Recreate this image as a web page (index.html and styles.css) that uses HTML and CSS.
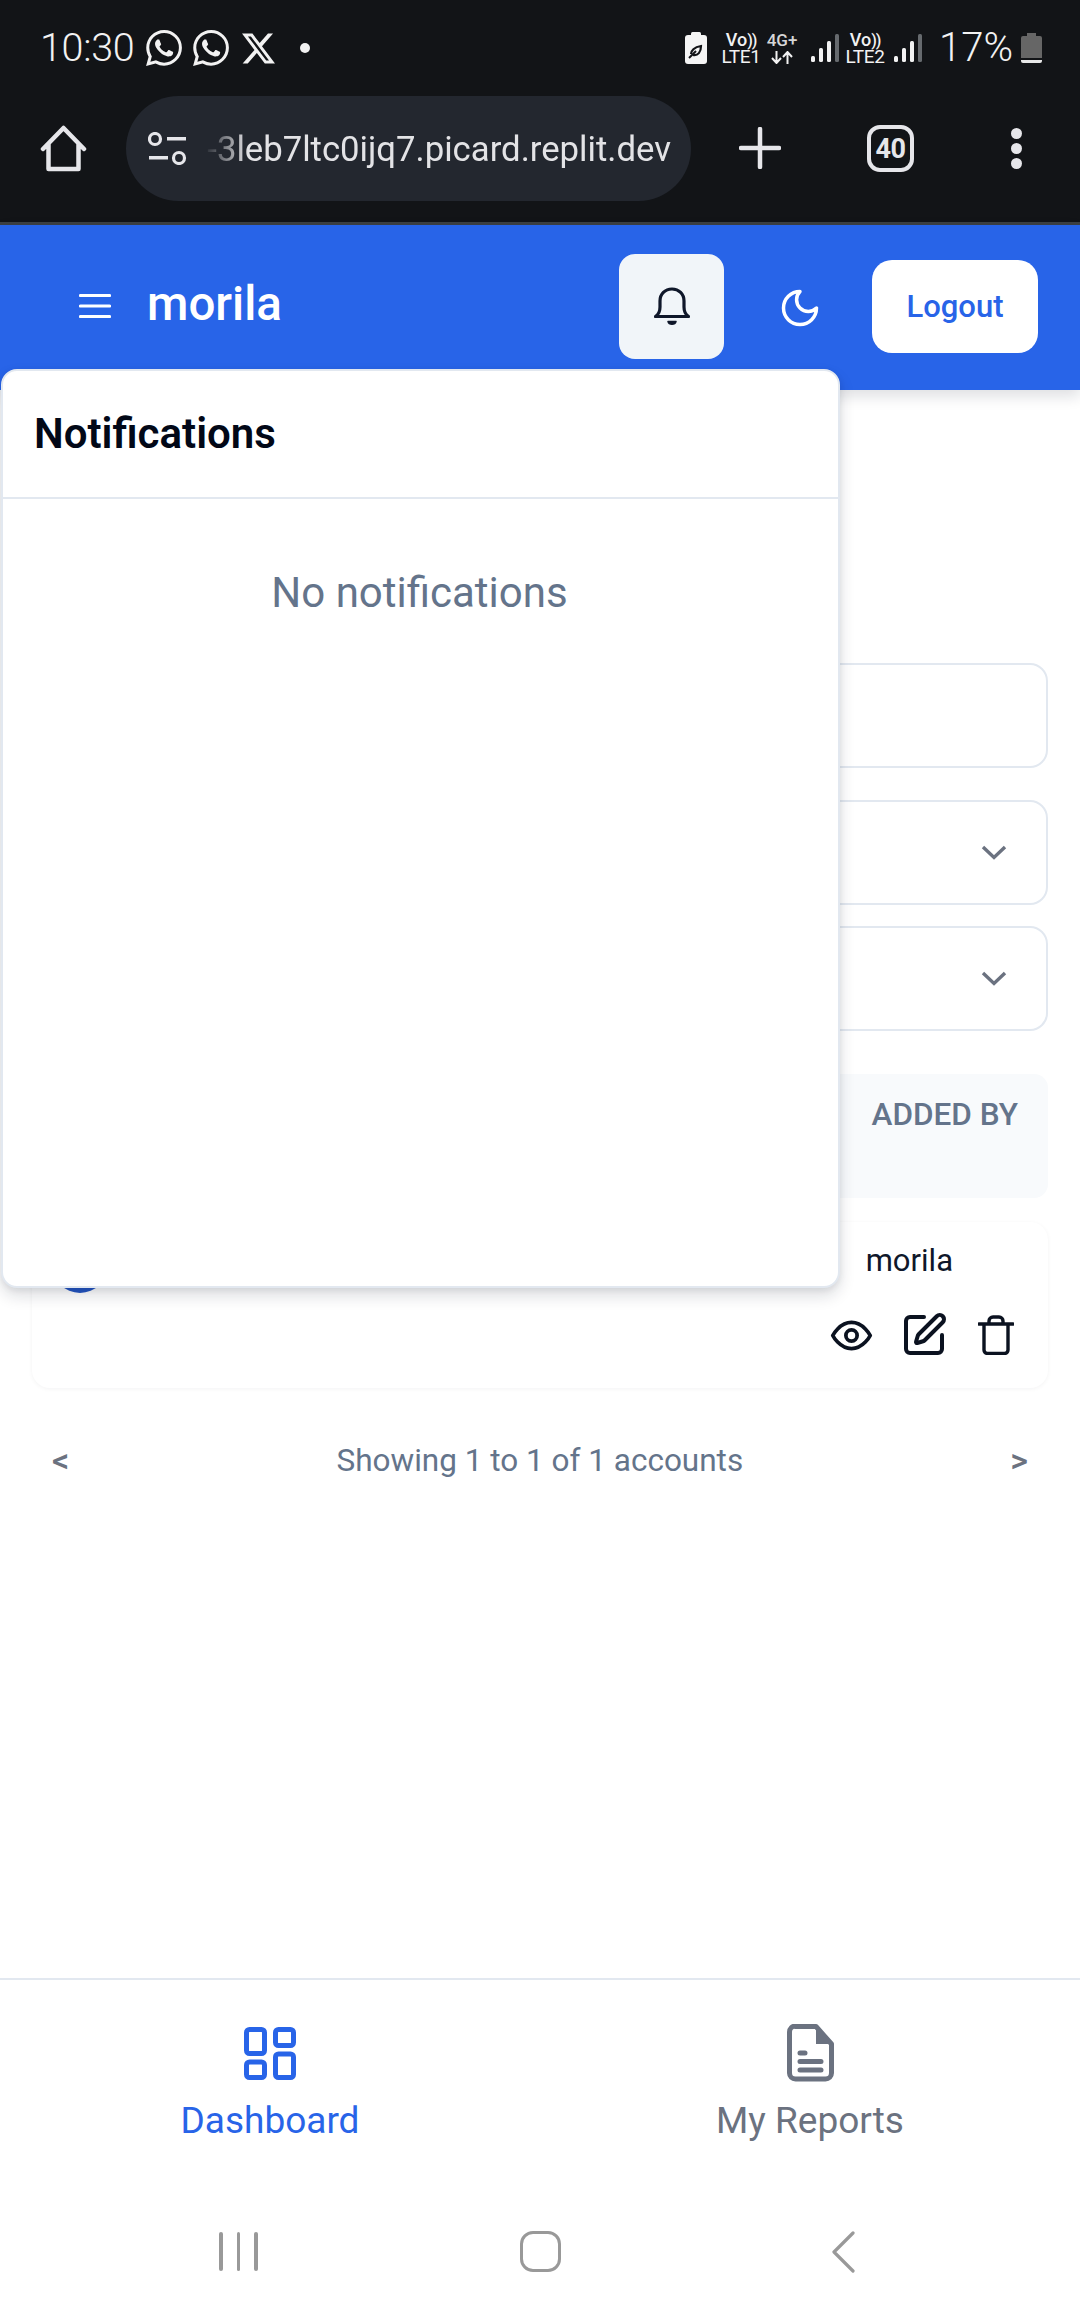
FILE: index.html
```html
<!DOCTYPE html>
<html lang="en">
<head>
<meta charset="utf-8">
<title>morila</title>
<link rel="stylesheet" href="styles.css">
</head>
<body>
<svg class="defs" width="0" height="0" aria-hidden="true">
  <symbol id="wa" viewBox="0 0 24 24"><path fill="currentColor" d="M17.472 14.382c-.297-.149-1.758-.867-2.03-.967-.273-.099-.471-.148-.67.15-.197.297-.767.966-.94 1.164-.173.199-.347.223-.644.075-.297-.15-1.255-.463-2.39-1.475-.883-.788-1.48-1.761-1.653-2.059-.173-.297-.018-.458.13-.606.134-.133.298-.347.446-.52.149-.174.198-.298.298-.497.099-.198.05-.371-.025-.52-.075-.149-.669-1.612-.916-2.207-.242-.579-.487-.5-.669-.51-.173-.008-.371-.01-.57-.01-.198 0-.52.074-.792.372-.272.297-1.04 1.016-1.04 2.479 0 1.462 1.065 2.875 1.213 3.074.149.198 2.096 3.2 5.077 4.487.709.306 1.262.489 1.694.625.712.227 1.36.195 1.871.118.571-.085 1.758-.719 2.006-1.413.248-.694.248-1.289.173-1.413-.074-.124-.272-.198-.57-.347m-5.421 7.403h-.004a9.87 9.87 0 01-5.031-1.378l-.361-.214-3.741.982.998-3.648-.235-.374a9.86 9.86 0 01-1.51-5.26c.001-5.45 4.436-9.884 9.888-9.884 2.64 0 5.122 1.03 6.988 2.898a9.825 9.825 0 012.893 6.994c-.003 5.45-4.437 9.884-9.885 9.884m8.413-18.297A11.815 11.815 0 0012.05 0C5.495 0 .16 5.335.157 11.892c0 2.096.547 4.142 1.588 5.945L.057 24l6.305-1.654a11.882 11.882 0 005.683 1.448h.005c6.554 0 11.89-5.335 11.893-11.893a11.821 11.821 0 00-3.48-8.413z"/></symbol>
  <symbol id="bars" viewBox="0 0 30 28">
    <rect x="0" y="22" width="4" height="6" rx="1.5" fill="#f2f2f2"/>
    <rect x="8" y="14" width="4" height="14" rx="1.5" fill="#f2f2f2"/>
    <rect x="16" y="7" width="4" height="21" rx="1.5" fill="#f2f2f2"/>
    <rect x="24" y="0" width="4" height="28" rx="1.5" fill="#666a6e"/>
  </symbol>
  <symbol id="chev" viewBox="0 0 26 15"><path d="M2 2l11 10.500L24 2" fill="none" stroke="#6b7280" stroke-width="3.400"/></symbol>
</svg>

<div class="app">
  <div class="chrome">
    <div class="status">
      <span class="time">10:30</span>
      <svg class="ic-wa"><use href="#wa"/></svg>
      <svg class="ic-wa ic-wa2"><use href="#wa"/></svg>
      <svg class="ic-x" viewBox="0 0 24 24"><path fill="#f2f2f2" d="M18.901 1.153h3.68l-8.04 9.19L24 22.846h-7.406l-5.8-7.584-6.638 7.584H.474l8.6-9.83L0 1.154h7.594l5.243 6.932ZM17.61 20.644h2.039L6.486 3.24H4.298Z"/></svg>
      <span class="dot"></span>
      <span class="grow"></span>
      <svg class="ic-eco" viewBox="0 0 22 32"><rect x="0" y="3" width="22" height="29" rx="3" fill="#f5f5f5"/><rect x="6" y="0" width="10" height="5" rx="1.5" fill="#f5f5f5"/><path d="M6 22c0-3 3-7 10-8 0 6-3 10-8 9" fill="none" stroke="#121417" stroke-width="2.200"/><path d="M4 26l7-7" stroke="#121417" stroke-width="2"/></svg>
      <span class="net net1"><b>Vo<i>))</i></b><em>LTE1</em></span>
      <span class="net4g"><b>4G+</b>
        <svg class="ic-arrows" viewBox="0 0 22 13"><path d="M5.500 0v11M1 7l4.500 5L10 7M16.500 13V2M12 6l4.500-5L21 6" fill="none" stroke="#f2f2f2" stroke-width="2"/></svg>
      </span>
      <svg class="ic-bars ic-bars1"><use href="#bars"/></svg>
      <span class="net net2"><b>Vo<i>))</i></b><em>LTE2</em></span>
      <svg class="ic-bars ic-bars2"><use href="#bars"/></svg>
      <span class="pct">17%</span>
      <svg class="ic-batt" viewBox="0 0 21 30"><path d="M6 0h9v3h4a2 2 0 0 1 2 2v20H0V5a2 2 0 0 1 2-2h4z" fill="#666"/><path d="M0 27h21v1a2 2 0 0 1-2 2H2a2 2 0 0 1-2-2z" fill="#e8e8e8"/></svg>
    </div>
    <div class="toolbar">
      <svg class="ic-home" viewBox="0 0 47 47"><path d="M3 24L23.500 3 44 24M8.500 19v25h30V19" fill="none" stroke="#e6e6ea" stroke-width="4.500" stroke-linejoin="round" stroke-linecap="round"/></svg>
      <div class="pill">
        <svg class="ic-tune" viewBox="0 0 39 33"><circle cx="7" cy="7" r="5.500" fill="none" stroke="#e6e6ea" stroke-width="3.200"/><rect x="19" y="5" width="19" height="3.500" fill="#e6e6ea"/><rect x="1" y="24" width="19" height="3.500" fill="#e6e6ea"/><circle cx="31" cy="26" r="5.500" fill="none" stroke="#e6e6ea" stroke-width="3.200"/></svg>
        <div class="url"><span>-3leb7ltc0ijq7.picard.replit.dev</span></div>
      </div>
      <svg class="ic-plus" viewBox="0 0 42 42"><path d="M21 2v38M2 21h38" stroke="#e6e6ea" stroke-width="4.500" stroke-linecap="round"/></svg>
      <span class="tabs">40</span>
      <span class="more"><i></i><i></i><i></i></span>
    </div>
  </div>

  <header class="appbar">
    <svg class="ic-menu" viewBox="0 0 32 26"><path d="M1.500 2.500h29M1.500 13h29M1.500 23.500h29" stroke="#fff" stroke-width="3.200" stroke-linecap="round"/></svg>
    <span class="brand">morila</span>
    <span class="grow"></span>
    <button class="bell-btn">
      <svg class="ic-bell" viewBox="0 0 36 40"><path d="M1.500 29.500c3-2 4.500-5 4.500-9.500v-6C6 7 11 2 18 2s12 5 12 12v6c0 4.500 1.500 7.500 4.500 9.500z" fill="none" stroke="#0f172a" stroke-width="3.200" stroke-linejoin="round"/><path d="M14 34.500c1 3.500 7 3.500 8 0z" fill="#0f172a" stroke="#0f172a" stroke-width="1.500" stroke-linejoin="round"/></svg>
    </button>
    <svg class="ic-moon" viewBox="0 0 24 24"><path d="M12 3a6 6 0 0 0 9 9 9 9 0 1 1-9-9Z" fill="none" stroke="#fff" stroke-width="1.900" stroke-linecap="round" stroke-linejoin="round"/></svg>
    <button class="logout">Logout</button>
  </header>

  <main class="content">
    <div class="field"></div>
    <div class="field field-select"><svg class="chev"><use href="#chev"/></svg></div>
    <div class="field field-select field-last"><svg class="chev"><use href="#chev"/></svg></div>
    <div class="thead"><span>ADDED BY</span></div>
    <div class="row">
      <span class="avatar"></span>
      <div class="row-right">
        <span class="owner">morila</span>
        <div class="actions">
          <svg class="ic-eye" viewBox="0 0 24 24"><path d="M2 12s3.600-7 10-7 10 7 10 7-3.600 7-10 7-10-7-10-7Z" fill="none" stroke="#0b1220" stroke-width="2" stroke-linejoin="round"/><circle cx="12" cy="12" r="3" fill="none" stroke="#0b1220" stroke-width="2"/></svg>
          <svg class="ic-edit" viewBox="0 0 24 24"><path d="M12 3H5a2 2 0 0 0-2 2v14a2 2 0 0 0 2 2h14a2 2 0 0 0 2-2v-7" fill="none" stroke="#0b1220" stroke-width="2" stroke-linecap="round"/><path d="M18.375 2.625a1 1 0 0 1 3 3l-9.013 9.014a2 2 0 0 1-.853.505l-2.873.84a.5.5 0 0 1-.62-.62l.84-2.873a2 2 0 0 1 .506-.852z" fill="none" stroke="#0b1220" stroke-width="2" stroke-linejoin="round"/></svg>
          <svg class="ic-trash" viewBox="0 0 36 40"><path d="M1 9h34M6 9v26a3.500 3.500 0 0 0 3.500 3.500h17A3.500 3.500 0 0 0 30 35V9M11 9V6a4 4 0 0 1 4-4h6a4 4 0 0 1 4 4v3" fill="none" stroke="#0b1220" stroke-width="3.400" stroke-linecap="round" stroke-linejoin="round"/></svg>
        </div>
      </div>
    </div>
    <div class="pager">
      <span class="pg">&lt;</span>
      <span class="pg-text">Showing 1 to 1 of 1 accounts</span>
      <span class="pg">&gt;</span>
    </div>
  </main>

  <nav class="tabbar">
    <div class="tab tab-active">
      <svg class="ic-dash" viewBox="0 0 52 53"><g fill="none" stroke="#2864e8" stroke-width="5"><rect x="2.500" y="2.500" width="18" height="24" rx="3"/><rect x="31.500" y="2.500" width="18" height="16" rx="3"/><rect x="31.500" y="27" width="18" height="23.500" rx="3"/><rect x="2.500" y="35" width="18" height="15.500" rx="3"/></g></svg>
      <span>Dashboard</span>
    </div>
    <div class="tab">
      <svg class="ic-doc" viewBox="0 0 47 58"><path d="M8 2.500h21L44.500 20v29a6 6 0 0 1-6 6h-30a6 6 0 0 1-6-6V8a6 6 0 0 1 6-6z" fill="none" stroke="#6b7280" stroke-width="5" stroke-linejoin="round"/><path d="M29 2.500V20h15.500z" fill="#6b7280"/><path d="M13 29h5M13 37.500h21M13 46h21" stroke="#6b7280" stroke-width="5" stroke-linecap="round"/></svg>
      <span>My Reports</span>
    </div>
  </nav>

  <div class="sysnav">
    <span class="recents"><i></i><i></i><i></i></span>
    <span class="homebtn"></span>
    <svg class="backbtn" viewBox="0 0 24 42"><path d="M22 2L3 21l19 19" fill="none" stroke="#999" stroke-width="3.200" stroke-linecap="round" stroke-linejoin="round"/></svg>
  </div>

  <section class="panel">
    <h2 class="panel-title">Notifications</h2>
    <p class="panel-empty">No notifications</p>
  </section>
</div>
</body>
</html>
```
FILE: styles.css
```css
* { box-sizing: border-box; }
html, body { margin: 0; padding: 0; background: #fff; }
body { font-family: Roboto, "Liberation Sans", sans-serif; overflow: hidden; }
.defs { position: absolute; }
svg { display: block; flex: none; }
button { font-family: inherit; border: 0; padding: 0; }
.grow { flex: 1; }

.app { position: relative; width: 1080px; height: 2316px; display: flex; flex-direction: column; overflow: hidden; }

/* browser chrome */
.chrome { height: 225px; flex: none; background: #121417; border-bottom: 3px solid #3c4043; color: #f2f2f2; }
.status { height: 96px; display: flex; align-items: center; padding: 0 38px 0 40px; }
.time { font-size: 39.500px; font-weight: 300; line-height: 1; letter-spacing: -.3px; width: 106px; }
.ic-wa { width: 36px; height: 36px; color: #f2f2f2; }
.ic-wa2 { margin-left: 11px; }
.ic-x { width: 33px; height: 33px; margin-left: 13px; }
.dot { width: 10px; height: 10px; border-radius: 50%; background: #f2f2f2; margin-left: 25px; }
.ic-eco { width: 22px; height: 32px; }
.net, .net4g { display: flex; flex-direction: column; align-items: center; line-height: 17px; }
.net b, .net4g b { font-weight: 500; font-size: 18px; height: 17px; }
.net b i { font-style: normal; font-size: 16px; letter-spacing: -1px; }
.net em { font-style: normal; font-size: 19px; font-weight: 400; height: 17px; letter-spacing: -.4px; }
.net1 { margin-left: 14px; width: 40px; }
.net4g { margin-left: 5px; width: 32px; color: #d6d6d6; }
.net4g b { font-size: 17px; }
.ic-arrows { width: 22px; height: 13px; margin-top: 2px; }
.ic-bars { width: 30px; height: 28px; }
.ic-bars1 { margin-left: 13px; }
.net2 { margin-left: 3px; width: 42px; }
.ic-bars2 { margin-left: 8px; }
.pct { font-size: 40px; font-weight: 300; line-height: 1; margin-left: 15px; width: 77px; white-space: nowrap; }
.ic-batt { width: 21px; height: 30px; margin-left: 5px; }

.toolbar { height: 126px; display: flex; align-items: flex-start; padding-left: 40px; }
.ic-home { width: 47px; height: 47px; margin-top: 29px; }
.pill { width: 565px; height: 105px; margin-left: 39px; border-radius: 53px; background: #23272f; display: flex; align-items: center; padding-left: 22px; }
.ic-tune { width: 39px; height: 33px; }
.url { width: 467px; margin-left: 17px; overflow: hidden; display: flex; justify-content: flex-end; font-size: 34.700px; line-height: 50px; color: #e3e3e6; white-space: nowrap; -webkit-mask-image: linear-gradient(to right, transparent 0, #000 44px); mask-image: linear-gradient(to right, transparent 0, #000 44px); }
.ic-plus { width: 42px; height: 42px; margin: 31px 0 0 48px; }
.tabs { width: 47px; height: 47px; margin: 29px 0 0 86px; border: 4.500px solid #e6e6ea; border-radius: 13px; display: flex; align-items: center; justify-content: center; font-size: 27px; font-weight: 700; letter-spacing: -.5px; color: #e6e6ea; }
.more { display: flex; flex-direction: column; gap: 4px; margin: 32px 0 0 97px; }
.more i { width: 11px; height: 11px; border-radius: 50%; background: #e6e6ea; }

/* app header */
.appbar { position: relative; z-index: 1; height: 165px; flex: none; background: #2864e8; box-shadow: 0 6px 14px rgba(15, 23, 42, .14); display: flex; align-items: center; padding: 0 42px 0 79px; }
.ic-menu { width: 32px; height: 26px; margin-top: -3px; }
.brand { font-size: 47.500px; font-weight: 500; color: #fff; margin-left: 36px; margin-top: -5px; line-height: 1; }
.bell-btn { width: 105px; height: 105px; border-radius: 16px; background: #f1f5f9; display: flex; align-items: center; justify-content: center; margin-top: -2px; }
.ic-bell { width: 36px; height: 40px; }
.ic-moon { width: 44px; height: 44px; margin-left: 53.500px; }
.logout { width: 166px; height: 93px; margin-left: 50.500px; border-radius: 20px; background: #fff; color: #2864e8; font-size: 31px; font-weight: 500; margin-top: -3px; }

/* page */
.content { flex: 1; padding: 273px 32px 0; }
.field { height: 105px; border: 2px solid #e2e8f0; border-radius: 18px; margin-bottom: 32px; display: flex; align-items: center; justify-content: flex-end; padding-right: 39px; }
.field-select { margin-bottom: 21px; }
.field-last { margin-bottom: 43px; }
.chev { width: 26px; height: 15px; }
.thead { height: 124px; background: #f8fafc; border-radius: 14px; display: flex; justify-content: flex-end; padding: 24px 30px 0 0; margin-bottom: 24px; }
.thead span { font-size: 31.500px; font-weight: 500; color: #64748b; line-height: 34px; }
.row { height: 166px; border-radius: 18px; box-shadow: 0 1px 4px rgba(15, 23, 42, .05); display: flex; justify-content: space-between; padding: 0 34px 0 20px; }
.avatar { width: 56px; height: 56px; margin-top: 15px; border-radius: 50%; background: #2456c4; }
.row-right { display: flex; flex-direction: column; align-items: flex-end; padding-top: 21px; }
.owner { font-size: 31px; line-height: 36px; color: #0f172a; padding-right: 61px; }
.actions { display: flex; align-items: center; gap: 25px; margin-top: 32px; }
.ic-eye { width: 45px; height: 45px; }
.ic-edit { width: 48px; height: 48px; margin-left: 1px; }
.ic-trash { width: 36px; height: 40px; margin-left: 5px; }
.pager { display: flex; align-items: center; justify-content: space-between; padding: 0 20px 0 20px; margin-top: 54px; height: 36px; }
.pg { font-size: 34px; font-weight: 500; color: #6b7280; }
.pg-text { font-size: 31.500px; color: #64748b; }

/* tab bar */
.tabbar { flex: none; height: 212px; border-top: 2px solid #e2e8f0; display: grid; grid-template-columns: 1fr 1fr; background: #fff; }
.tab { display: flex; flex-direction: column; align-items: center; padding-top: 47px; color: #6b7280; font-size: 37px; line-height: 42px; }
.tab-active { color: #2864e8; }
.ic-dash { width: 52px; height: 53px; margin-bottom: 20px; }
.ic-doc { width: 47px; height: 58px; margin-top: -3px; margin-bottom: 18px; }

/* system nav */
.sysnav { flex: none; height: 126px; display: flex; align-items: flex-start; padding: 41px 0 0 219px; }
.recents { display: flex; gap: 14px; margin-top: 1px; }
.recents i { width: 3.500px; height: 39px; background: #999; border-radius: 2px; }
.homebtn { width: 41px; height: 41px; border: 3.500px solid #999; border-radius: 13px; margin-left: 262px; }
.backbtn { width: 24px; height: 42px; margin-left: 270px; }

/* notification dropdown */
.panel { position: absolute; z-index: 5; left: 1px; top: 369px; width: 839px; height: 919px; margin: 0; background: #fff; border: 2px solid #e2e8f0; border-radius: 16px; box-shadow: 0 8px 16px rgba(15, 23, 42, .14), 0 2px 6px rgba(15, 23, 42, .08); }
.panel-title { margin: 0; height: 128px; border-bottom: 2px solid #e2e8f0; padding: 39px 31px 0; font-size: 42px; line-height: 48px; font-weight: 600; color: #020817; }
.panel-empty { margin: 0; padding: 70px 2px 0 0; text-align: center; font-size: 42px; line-height: 48px; color: #64748b; }
```
